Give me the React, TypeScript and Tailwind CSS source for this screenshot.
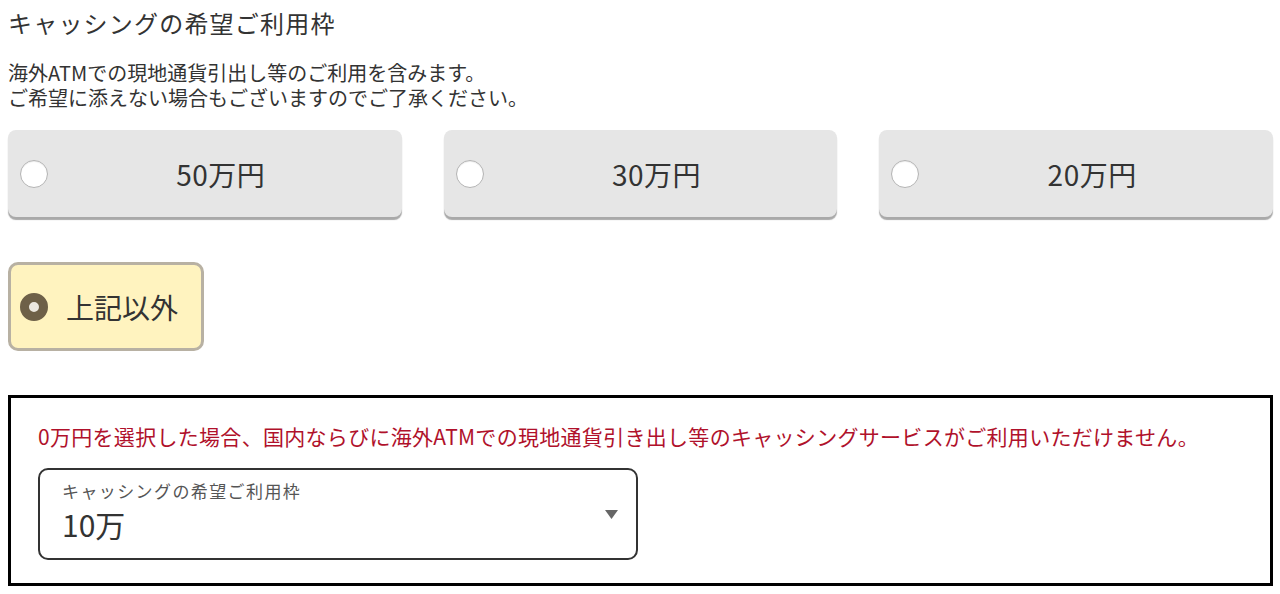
import React from "react";

const font = { fontFamily: '"Noto Sans CJK JP", "Noto Sans", sans-serif' };

function Card({ label }: { label: string }) {
  return (
    <div className="flex h-[87px] items-center rounded-[8px] bg-[#e6e6e6] pl-3 pr-2 shadow-[0_3px_1px_#a9a9a9]">
      <span className="h-7 w-7 shrink-0 rounded-full border-[1.5px] border-[#b4b4b4] bg-white shadow-[inset_0_1px_1px_rgba(0,0,0,0.08)]" />
      <span className="flex-1 text-center text-[28px] leading-none tracking-[0.5px] text-[#333]">{label}</span>
    </div>
  );
}

export default function App() {
  return (
    <div className="bg-white pb-[10px] pl-[8px] pr-[7px] pt-[5px] text-[#333]" style={font}>
      <h2 className="text-[24px] font-normal leading-[36px] tracking-[1.2px] text-[#333]">
        キャッシングの希望ご利用枠
      </h2>
      <p className="mt-[19px] text-[20px] leading-[25px] text-[#333]">
        海外ATMでの現地通貨引出し等のご利用を含みます。
        <br />
        ご希望に添えない場合もございますのでご了承ください。
      </p>
      <div className="mt-[20px] grid grid-cols-3 gap-x-[42px]">
        <Card label="50万円" />
        <Card label="30万円" />
        <Card label="20万円" />
      </div>
      <div className="mt-[45px] flex h-[89px] w-[196px] items-center gap-[18px] rounded-[10px] border-[3px] border-[#b8b1a3] bg-[#fff3bf] pl-[9px]">
        <span className="h-7 w-7 shrink-0 rounded-full border-[9px] border-[#6e6048] bg-[#ece8e0]" />
        <span className="text-[28px] leading-none text-[#333]">上記以外</span>
      </div>
      <div className="mt-[44px] border-[3px] border-black px-[27px] pb-[23px] pt-[22px]">
        <p className="text-[21px] leading-[32px] tracking-[0.3px] text-[#b0112b]">
          0万円を選択した場合、国内ならびに海外ATMでの現地通貨引き出し等のキャッシングサービスがご利用いただけません。
        </p>
        <div className="relative mt-[16px] h-[92px] w-[600px] rounded-[10px] border-2 border-[#333] bg-white px-[22px] pt-[9px]">
          <div className="text-[17px] leading-[24px] tracking-[1.4px] text-[#555]">キャッシングの希望ご利用枠</div>
          <div className="mt-[4px] text-[30px] leading-[34px] text-[#333]">10万</div>
          <svg
            className="absolute right-[18px] top-[40px]"
            width="13"
            height="9"
            viewBox="0 0 13 9"
          >
            <path d="M0 0 H13 L6.5 9 Z" fill="#666" />
          </svg>
        </div>
      </div>
    </div>
  );
}
